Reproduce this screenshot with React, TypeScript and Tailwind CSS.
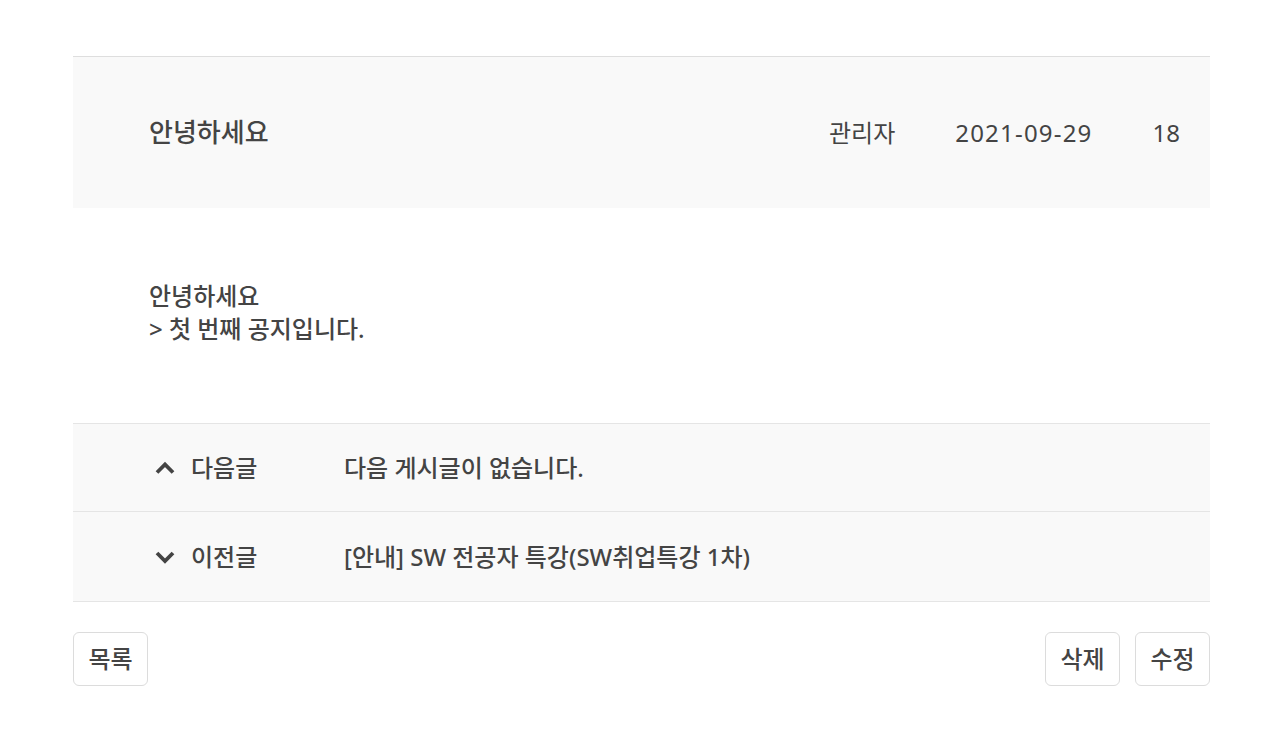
import React from "react";

const font = { fontFamily: '"Noto Sans", "Noto Sans CJK KR", sans-serif' };

const ChevronUp = () => (
  <svg width="22" height="20" viewBox="0 0 22 20" fill="none" className="shrink-0">
    <path d="M3 14.5L11 6.5L19 14.5" stroke="#444" strokeWidth="3.8" />
  </svg>
);

const ChevronDown = () => (
  <svg width="22" height="20" viewBox="0 0 22 20" fill="none" className="shrink-0">
    <path d="M3 6L11 14L19 6" stroke="#444" strokeWidth="3.8" />
  </svg>
);

const NavRow = ({ icon, label, title, h }: { icon: React.ReactNode; label: string; title: string; h: string }) => (
  <div className={`flex items-center bg-[#f9f9f9] border-b border-[#e5e5e5] ${h}`}>
    <div className="flex items-center w-[271px] pl-[81px] gap-[15px]">
      {icon}
      <span>{label}</span>
    </div>
    <span>{title}</span>
  </div>
);

const App = () => {
  return (
    <div className="bg-white min-h-[747px] pt-[56px] text-[#444]" style={font}>
      <div className="w-[1137px] ml-[73px]">
        <div className="border-t border-[#dedede] bg-[#f9f9f9] h-[152px] flex items-center pl-[76px] pr-[30px]">
          <h1 className="text-[26px] font-medium flex-1">안녕하세요</h1>
          <div className="flex items-center text-[24px]">
            <span>관리자</span>
            <span className="ml-[60px] tracking-[1.2px]">2021-09-29</span>
            <span className="ml-[60px]">18</span>
          </div>
        </div>
        <div className="h-[215px] flex flex-col justify-center pl-[76px] pb-[8px] text-[24px] leading-[33px] font-medium">
          <p>안녕하세요</p>
          <p>&gt; 첫 번째 공지입니다.</p>
        </div>
        <div className="border-t border-[#e5e5e5] text-[24px] font-medium">
          <NavRow icon={<ChevronUp />} label="다음글" title="다음 게시글이 없습니다." h="h-[88px]" />
          <NavRow icon={<ChevronDown />} label="이전글" title="[안내] SW 전공자 특강(SW취업특강 1차)" h="h-[90px]" />
        </div>
        <div className="flex justify-between mt-[30px] text-[24px] font-medium">
          <button className="w-[75px] h-[54px] border border-[#dcdcdc] rounded-[6px] bg-white">목록</button>
          <div className="flex gap-[15px]">
            <button className="w-[75px] h-[54px] border border-[#dcdcdc] rounded-[6px] bg-white">삭제</button>
            <button className="w-[75px] h-[54px] border border-[#dcdcdc] rounded-[6px] bg-white">수정</button>
          </div>
        </div>
      </div>
    </div>
  );
};

export default App;
